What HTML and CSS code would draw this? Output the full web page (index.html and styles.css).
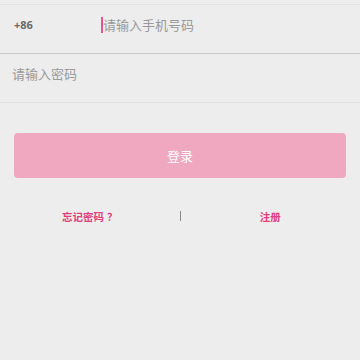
FILE: index.html
```html
<!DOCTYPE html>
<html lang="zh-CN">
<head>
    <meta charset="UTF-8">
    <meta name="viewport" content="width=device-width, initial-scale=1.0">
    <title>登录</title>
    <link rel="stylesheet" href="styles.css">
</head>
<body>
    <div class="login">
        <div class="form">
            <div class="row phone-row">
                <span class="area-code">+86</span>
                <span class="cursor"></span>
                <span class="placeholder">请输入手机号码</span>
            </div>
            <div class="row pwd-row">
                <span class="placeholder">请输入密码</span>
            </div>
        </div>

        <div class="btn-wrap">
            <div class="login-btn">登录</div>
        </div>

        <div class="links">
            <span class="link">忘记密码<span class="qmark">？</span></span>
            <span class="sep"></span>
            <span class="link">注册</span>
        </div>
    </div>
</body>
</html>
```

FILE: styles.css
```css
html, body {
    margin: 0;
    padding: 0;
    background-color: #ededed;
}
body {
    font-family: 'Noto Sans', 'Noto Sans CJK SC', sans-serif;
    width: 360px;
    height: 360px;
    overflow: hidden;
}
.form {
    padding-top: 4px;
}
.row {
    display: flex;
    align-items: center;
    box-sizing: border-box;
}
.phone-row {
    height: 50px;
    padding-bottom: 9px;
    border-top: 1px solid #e2e2e2;
    border-bottom: 1px solid #c9c9c9;
}
.pwd-row {
    height: 49px;
    padding-left: 12px;
    padding-bottom: 9px;
    border-bottom: 1px solid #e2e2e2;
}
.area-code {
    width: 87px;
    padding-left: 14px;
    font-size: 11px;
    color: #6a6a6a;
    font-weight: bold;
}
.cursor {
    width: 2px;
    height: 16px;
    background-color: #e9548a;
}
.placeholder {
    font-size: 13px;
    color: #9a9a9a;
}
.btn-wrap {
    padding: 30px 14px 0;
}
.login-btn {
    height: 45px;
    border-radius: 4px;
    background-color: #f0a8c0;
    color: #fff;
    font-size: 13px;
    display: flex;
    align-items: center;
    justify-content: center;
}
.links {
    display: flex;
    align-items: center;
    margin-top: 30px;
    height: 16px;
}
.link {
    flex: 1;
    text-align: center;
    font-family: 'Noto Sans CJK SC', sans-serif;
    font-size: 10.5px;
    font-weight: bold;
    color: #e23e7c;
}
.qmark {
    padding-left: 3px;
}
.sep {
    width: 1px;
    height: 10px;
    background-color: #888;
}
```
